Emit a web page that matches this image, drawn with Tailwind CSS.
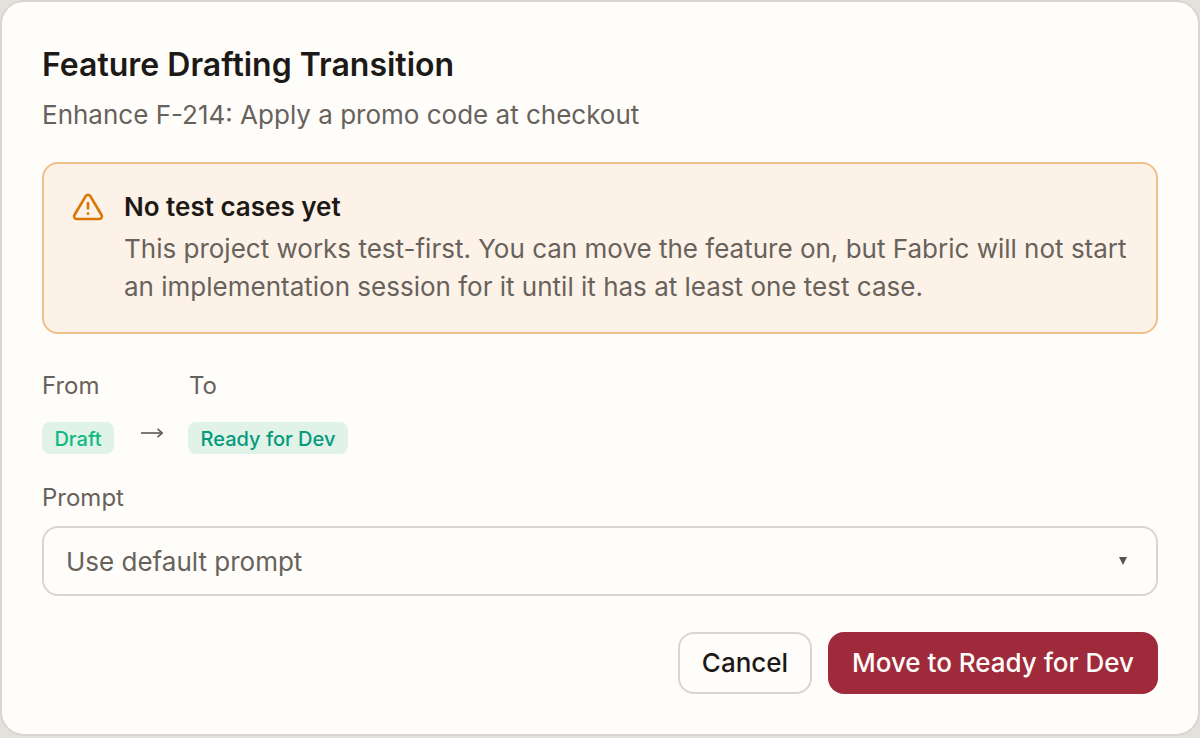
<!DOCTYPE html>
<html><head><meta charset="utf-8"><script src="https://cdn.jsdelivr.net/npm/@tailwindcss/browser@4"></script></head>
<body class="m-0 bg-[#e4e1dc]">
<div class="w-[1200px] h-[738px] overflow-hidden font-['Inter',sans-serif]">
<div class="w-[1200px] h-[736px] bg-[#fffdf9] border-2 border-[#d9d5cf] rounded-[24px] px-[40px] pt-[40px] flex flex-col">
<h1 class="text-[32px] leading-[46px] font-semibold text-[#1c1917] h-[46px]">Feature Drafting Transition</h1>
<p class="text-[26px] leading-[38px] text-[#67625c] mt-[8px]">Enhance F-214: Apply a promo code at checkout</p>
<div class="mt-[28px] h-[172px] bg-[#fdf2e7] border-2 border-[#f0c089] rounded-[16px] pl-[28px] pt-[24px] flex gap-[20px]">
<svg class="mt-[3px] w-[32px] h-[32px] shrink-0" viewBox="0 0 24 24" fill="none" stroke="#d97706" stroke-width="2" stroke-linecap="round" stroke-linejoin="round"><path d="M10.3 3.86 1.82 18a2 2 0 0 0 1.71 3h16.94a2 2 0 0 0 1.71-3L13.71 3.86a2 2 0 0 0-3.42 0Z"/><path d="M12 9v4"/><path d="M12 17h.01"/></svg>
<div>
<div class="text-[26px] leading-[38px] font-semibold text-[#1c1917] h-[38px]">No test cases yet</div>
<div class="mt-[4px] text-[26px] leading-[38px] text-[#67625c]">This project works test-first. You can move the feature on, but Fabric will not start<br>an implementation session for it until it has at least one test case.</div>
</div></div>
<div class="mt-[32px] flex text-[#67625c] text-[24px] leading-[40px]"><span class="w-[147px]">From</span><span>To</span></div>
<div class="mt-[16px] flex items-center h-[32px]">
<span class="w-[72px] h-[32px] pt-[2px] rounded-[8px] bg-[#e1f2e9] text-[#10b981] text-[20px] font-medium flex items-center justify-center">Draft</span>
<span class="w-[74px] pl-[27px] -mt-[11px] flex"><svg class="w-[22px] h-[10px]" viewBox="0 0 22 10" fill="none" stroke="#67625c" stroke-width="1.7"><path d="M0 5H21"/><path d="M16.5 .8 21.3 5 16.5 9.2"/></svg></span>
<span class="w-[160px] h-[32px] pt-[2px] rounded-[8px] bg-[#e1f2e9] text-[#059a7a] text-[20px] font-medium flex items-center justify-center">Ready for Dev</span>
</div>
<div class="mt-[24px] text-[#67625c] text-[24px] leading-[40px]">Prompt</div>
<div class="mt-[8px] h-[70px] border-2 border-[#d9d5cf] rounded-[16px] flex items-center justify-between pl-[22px] pr-[29px] text-[26px] text-[#67625c]"><span>Use default prompt</span><span class="w-0 h-0 border-x-[4.5px] border-x-transparent border-t-[8px] border-t-[#57534e]"></span></div>
<div class="mt-[36px] flex justify-end gap-[16px]">
<button class="w-[134px] h-[62px] pb-[1px] rounded-[16px] border-2 border-[#d9d5cf] text-[26px] font-medium text-[#1c1917]">Cancel</button>
<button class="w-[330px] h-[62px] pb-[1px] rounded-[16px] bg-[#9f2a3b] text-[26px] font-medium text-[#fffdf9]">Move to Ready for Dev</button>
</div>
</div></div>
</body></html>
